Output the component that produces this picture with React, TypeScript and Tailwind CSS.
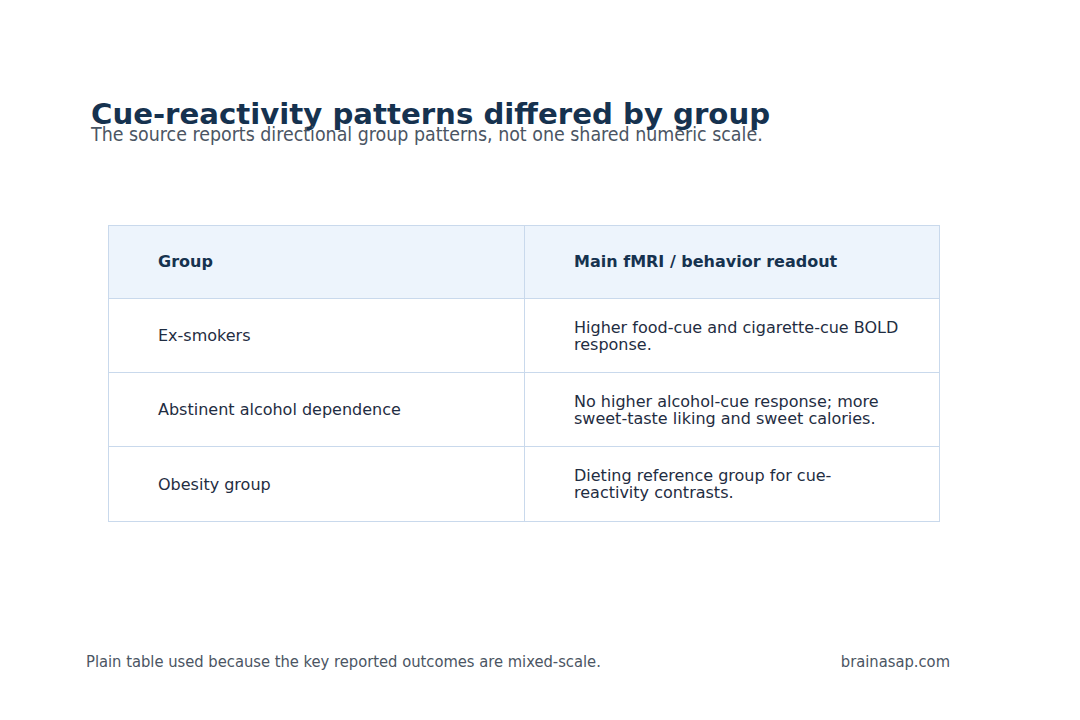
export default function App() {
  const rows = [
    ["Ex-smokers", "Higher food-cue and cigarette-cue BOLD response."],
    ["Abstinent alcohol dependence", "No higher alcohol-cue response; more sweet-taste liking and sweet calories."],
    ["Obesity group", "Dieting reference group for cue-reactivity contrasts."],
  ];
  const cond = { fontFamily: '"DejaVu Sans Condensed", "DejaVu Sans", sans-serif', fontStretch: "semi-condensed" } as const;
  return (
    <div className="w-[1080px] h-[720px] bg-white relative flex flex-col" style={{ fontFamily: '"DejaVu Sans", sans-serif' }}>
      <div className="pl-[91px] pt-[98px]">
        <h1 className="text-[29.2px] leading-[32px] font-bold text-[#16324f]">Cue-reactivity patterns differed by group</h1>
        <p className="text-[19.4px] leading-[14px] text-[#4b5563] -mt-[2px]" style={cond}>
          The source reports directional group patterns, not one shared numeric scale.
        </p>
      </div>
      <div className="ml-[108px] mt-[83px] w-[832px] border border-[#c9d9ec]">
        <div className="grid grid-cols-[416px_1fr] bg-[#edf4fc] h-[73px] border-b border-[#c9d9ec]">
          <div className="flex items-center pl-[49px] border-r border-[#c9d9ec] text-[16px] font-bold text-[#16324f]">Group</div>
          <div className="flex items-center pl-[49px] text-[16px] font-bold text-[#16324f]">Main fMRI / behavior readout</div>
        </div>
        {rows.map((r, i) => (
          <div key={i} className={`grid grid-cols-[416px_1fr] h-[74px] ${i < rows.length - 1 ? "border-b border-[#c9d9ec]" : ""}`}>
            <div className="flex items-center pl-[49px] border-r border-[#c9d9ec] text-[16px] leading-[17px] text-[#1f2d42]">{r[0]}</div>
            <div className="flex items-center pl-[49px] pr-[34px] text-[16px] leading-[17px] text-[#1f2d42]">{r[1]}</div>
          </div>
        ))}
      </div>
      <div className="flex justify-between pl-[86px] pr-[130px] mt-auto mb-[45px] text-[16.4px] text-[#4b5563]" style={cond}>
        <span>Plain table used because the key reported outcomes are mixed-scale.</span>
        <span>brainasap.com</span>
      </div>
    </div>
  );
}
